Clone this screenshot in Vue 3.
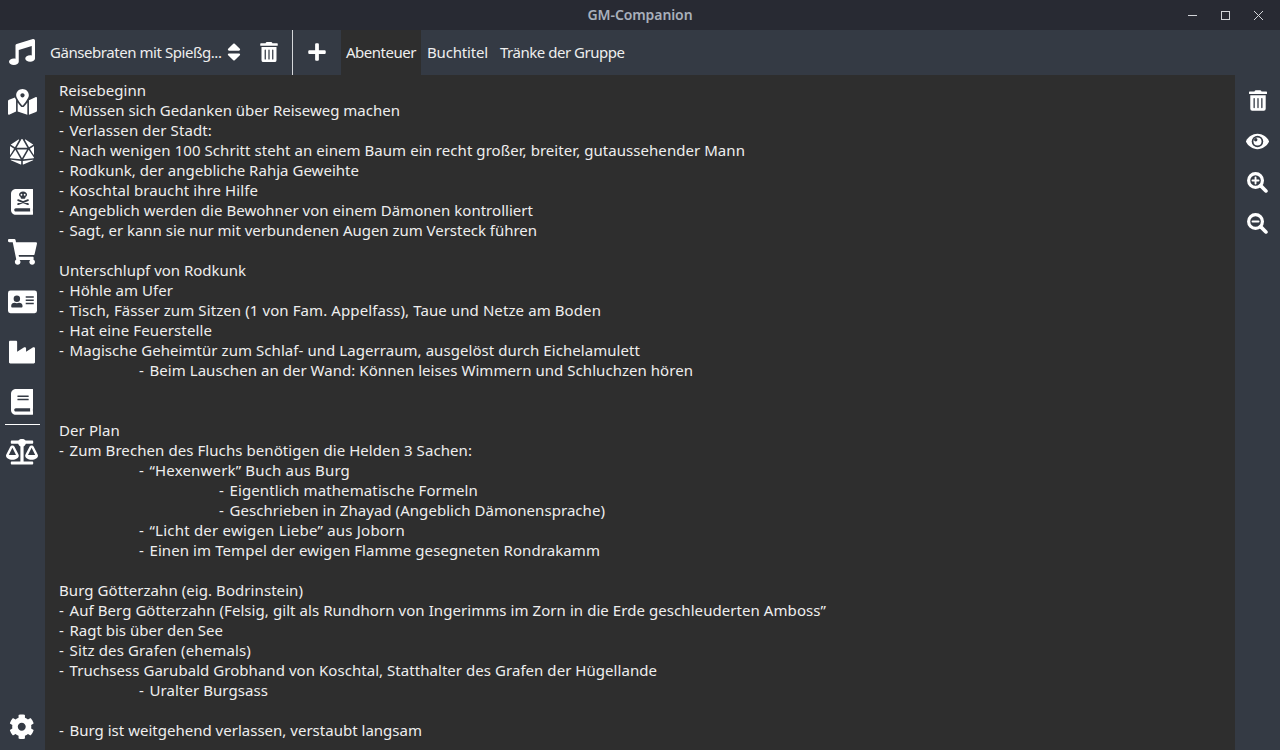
<script setup>
import { onMounted, ref } from 'vue'

const bookPath = 'M448 360V24c0-13.3-10.7-24-24-24H96C43 0 0 43 0 96v320c0 53 43 96 96 96h328c13.3 0 24-10.7 24-24v-16c0-7.5-3.5-14.3-8.9-18.7-4.2-15.4-4.2-59.3 0-74.7 5.4-4.3 8.9-11.1 8.9-18.6z'
const bookPages = 'M381.4 448H96c-17.7 0-32-14.3-32-32 0-17.6 14.4-32 32-32h285.4c-1.9 17.1-1.9 46.9 0 64z'
const icons = {
  music: { box: '0 0 512 512', w: 26, d: 'M511.99 32.01c0-21.71-21.1-37.01-41.6-30.51L150.4 96c-13.3 4.2-22.4 16.5-22.4 30.5v261.42c-10.05-2.38-20.72-3.92-32-3.92-53.02 0-96 28.65-96 64s42.98 64 96 64 96-28.65 96-64V214.31l256-75.02v184.63c-10.05-2.38-20.72-3.92-32-3.92-53.02 0-96 28.65-96 64s42.98 64 96 64 96-28.65 96-64l-.01-351.99z' },
  map: { box: '0 0 576 512', w: 29, d: 'M288 0c-69.59 0-126 56.41-126 126 0 56.26 82.35 158.8 113.9 196.02 6.39 7.54 17.82 7.54 24.2 0C331.65 284.8 414 182.26 414 126 414 56.41 357.59 0 288 0zm0 168c-23.2 0-42-18.8-42-42s18.8-42 42-42 42 18.8 42 42-18.8 42-42 42zM20.12 215.95A32.006 32.006 0 0 0 0 245.66v250.32c0 11.32 11.43 19.06 21.94 14.86L160 448V214.92c-8.84-15.98-16.07-31.54-21.25-46.42L20.12 215.95zM288 359.67c-14.07 0-27.38-6.18-36.51-16.96-19.66-23.2-40.57-49.62-59.49-76.72v182l192 64V266c-18.92 27.09-39.82 53.52-59.49 76.72-9.13 10.77-22.44 16.95-36.51 16.95zm266.06-198.51L416 224v288l139.88-55.95A31.996 31.996 0 0 0 576 426.34V176.02c0-11.32-11.43-19.06-21.94-14.86z' },
  dice: { box: '0 0 480 512', w: 24, d: 'M106.75 215.06L1.2 370.95c-3.08 5 .1 11.5 5.93 12.14l208.26 22.07-108.64-190.1zM7.41 315.43L82.7 193.08 6.06 147.1c-2.67-1.62-6.06.32-6.06 3.43v162.81c0 4.03 5.29 5.53 7.41 2.09zM18.25 423.6l194.4 87.66c5.3 2.45 11.35-1.43 11.35-7.26v-65.67l-203.55-22.3c-4.45-.5-6.23 5.59-2.2 7.57zm81.22-257.78L179.4 22.88c4.34-7.06-3.59-15.25-10.78-11.14L17.81 110.35c-2.47 1.62-2.39 5.26.13 6.78l81.53 48.69zM240 176h109.21L253.63 7.62C250.5 2.54 245.25 0 240 0s-10.5 2.54-13.63 7.62L130.79 176H240zm233.94-28.9l-76.64 45.99 75.29 122.35c2.11 3.44 7.41 1.94 7.41-2.1V150.53c0-3.11-3.39-5.05-6.06-3.43zm-93.41 18.72l81.53-48.7c2.53-1.52 2.6-5.16.13-6.78l-150.81-98.6c-7.19-4.11-15.12 4.08-10.78 11.14l79.93 142.94zm79.02 250.21L256 438.32v65.67c0 5.84 6.05 9.71 11.35 7.26l194.4-87.66c4.03-1.97 2.25-8.06-2.2-7.56zm-86.3-200.97l-108.63 190.1 208.26-22.07c5.83-.65 9.01-7.14 5.93-12.14L373.25 215.06zM240 208H139.57L240 383.75 340.43 208H240z' },
  monsters: { box: '0 0 448 512', w: 22.5, d: bookPath, cut: bookPages + 'M240 48c-45 0-80 27-80 62 0 21 13 38 32 50v16c0 9 7 16 16 16h64c9 0 16-7 16-16v-16c19-12 32-29 32-50 0-35-35-62-80-62zm-32 48a18 18 0 1 1 0 36 18 18 0 0 1 0-36zm64 0a18 18 0 1 1 0 36 18 18 0 0 1 0-36z', bones: 'M142 222L338 302M338 222L142 302' },
  cart: { box: '0 0 576 512', w: 29, d: 'M528.12 301.319l47.273-208C578.806 78.301 567.391 64 551.99 64H159.208l-9.166-44.81C147.758 8.021 137.93 0 126.529 0H24C10.745 0 0 10.745 0 24v16c0 13.255 10.745 24 24 24h69.883l70.248 343.435C147.325 417.1 136 435.222 136 456c0 30.928 25.072 56 56 56s56-25.072 56-56c0-15.674-6.447-29.835-16.824-40h209.647C430.447 426.165 424 440.326 424 456c0 30.928 25.072 56 56 56s56-25.072 56-56c0-22.172-12.888-41.332-31.579-50.405l5.517-24.276c3.413-15.018-8.002-29.319-23.403-29.319H218.117l-6.545-32h293.145c11.206 0 20.92-7.754 23.403-18.681z' },
  card: { box: '0 0 576 512', w: 29, d: 'M48 32h480a48 48 0 0 1 48 48v352a48 48 0 0 1-48 48H48a48 48 0 0 1-48-48V80a48 48 0 0 1 48-48z', cut: 'M176 128a64 64 0 1 1 0 128 64 64 0 0 1 0-128zM131 272c29 13 61 13 90 0 38 0 67 26 67 58v19c0 11-10 19-22 19H86c-12 0-22-8-22-19v-19c0-32 29-58 67-58zM352 144h160v32H352zM352 208h160v32H352zM352 272h160v32H352z' },
  industry: { box: '0 0 512 512', w: 26, d: 'M475.115 163.781L336 252.309v-68.28c0-18.916-20.931-30.399-36.885-20.248L160 252.309V56c0-13.255-10.745-24-24-24H24C10.745 32 0 42.745 0 56v400c0 13.255 10.745 24 24 24h464c13.255 0 24-10.745 24-24V184.029c0-18.917-20.931-30.399-36.885-20.248z' },
  book: { box: '0 0 448 512', w: 22.5, d: bookPath, cut: bookPages + 'M134 128h212q6 0 6 6v20q0 6-6 6H134q-6 0-6-6v-20q0-6 6-6zM134 192h212q6 0 6 6v20q0 6-6 6H134q-6 0-6-6v-20q0-6 6-6z' },
  scale: { box: '0 0 640 512', w: 32, d: 'M320 0c-38 0-62 14-71 32H112a16 16 0 0 0-16 16v32a16 16 0 0 0 16 16h131c8 24 23 42 45 52v300H112a16 16 0 0 0-16 16v32a16 16 0 0 0 16 16h416a16 16 0 0 0 16-16v-32a16 16 0 0 0-16-16H352V148c22-10 37-28 45-52h131a16 16 0 0 0 16-16V48a16 16 0 0 0-16-16H391c-9-18-33-32-71-32zM256 336c0-16 1-9-85-181-17-35-68-35-86 0C-2 329 0 321 0 336c0 44 57 80 128 80s128-36 128-80zM128 176l72 144H56zm512 160c0-16 1-9-85-181-17-35-68-35-86 0-87 174-85 166-85 181 0 44 57 80 128 80s128-36 128-80zM440 320l72-144 72 144z' },
  cog: { box: '0 0 512 512', w: 25.5, d: 'M487.4 315.7l-42.6-24.6c4.3-23.2 4.3-47 0-70.2l42.6-24.6c4.9-2.8 7.1-8.6 5.5-14-11.1-35.6-30-67.8-54.7-94.6-3.8-4.1-10-5.1-14.8-2.3L380.8 110c-17.9-15.4-38.5-27.3-60.8-35.1V25.8c0-5.6-3.9-10.5-9.4-11.7-36.7-8.2-74.3-7.8-109.2 0-5.5 1.2-9.4 6.1-9.4 11.7V75c-22.2 7.9-42.8 19.8-60.8 35.1L88.7 85.5c-4.9-2.8-11-1.9-14.8 2.3-24.7 26.7-43.6 58.9-54.7 94.6-1.7 5.4.6 11.2 5.5 14L67.3 221c-4.3 23.2-4.3 47 0 70.2l-42.6 24.6c-4.9 2.8-7.1 8.6-5.5 14 11.1 35.6 30 67.8 54.7 94.6 3.8 4.1 10 5.1 14.8 2.3l42.6-24.6c17.9 15.4 38.5 27.3 60.8 35.1v49.2c0 5.6 3.9 10.5 9.4 11.7 36.7 8.2 74.3 7.8 109.2 0 5.5-1.2 9.4-6.1 9.4-11.7v-49.2c22.2-7.9 42.8-19.8 60.8-35.1l42.6 24.6c4.9 2.8 11 1.9 14.8-2.3 24.7-26.7 43.6-58.9 54.7-94.6 1.5-5.5-.7-11.3-5.6-14.1zM256 336c-44.1 0-80-35.9-80-80s35.9-80 80-80 80 35.9 80 80-35.9 80-80 80z' }
}
const tools = ['music', 'map', 'dice', 'monsters', 'cart', 'card', 'industry', 'book', 'scale', 'cog']

const trash = 'M32 464a48 48 0 0 0 48 48h288a48 48 0 0 0 48-48V128H32zm272-256a16 16 0 0 1 32 0v224a16 16 0 0 1-32 0zm-96 0a16 16 0 0 1 32 0v224a16 16 0 0 1-32 0zm-96 0a16 16 0 0 1 32 0v224a16 16 0 0 1-32 0zM432 32H312l-9.4-18.7A24 24 0 0 0 281.1 0H166.8a23.72 23.72 0 0 0-21.4 13.3L136 32H16A16 16 0 0 0 0 48v32a16 16 0 0 0 16 16h416a16 16 0 0 0 16-16V48a16 16 0 0 0-16-16z'

// Each line: indent level, text, measure in pixels
const source = [
  [0, 'Reisebeginn', 87],
  [0, '- Müssen sich Gedanken über Reiseweg machen', 341],
  [0, '- Verlassen der Stadt:', 153],
  [0, '- Nach wenigen 100 Schritt steht an einem Baum ein recht großer, breiter, gutaussehender Mann', 686],
  [0, '- Rodkunk, der angebliche Rahja Geweihte', 300],
  [0, '- Koschtal braucht ihre Hilfe', 199],
  [0, '- Angeblich werden die Bewohner von einem Dämonen kontrolliert', 474],
  [0, '- Sagt, er kann sie nur mit verbundenen Augen zum Versteck führen', 478],
  [0, '', 0],
  [0, 'Unterschlupf von Rodkunk', 187],
  [0, '- Höhle am Ufer', 114],
  [0, '- Tisch, Fässer zum Sitzen (1 von Fam. Appelfass), Taue und Netze am Boden', 542],
  [0, '- Hat eine Feuerstelle', 153],
  [0, '- Magische Geheimtür zum Schlaf- und Lagerraum, ausgelöst durch Eichelamulett', 581],
  [1, '- Beim Lauschen an der Wand: Können leises Wimmern und Schluchzen hören', 554],
  [0, '', 0],
  [0, '', 0],
  [0, 'Der Plan', 61],
  [0, '- Zum Brechen des Fluchs benötigen die Helden 3 Sachen:', 413],
  [1, '- “Hexenwerk” Buch aus Burg', 211],
  [2, '- Eigentlich mathematische Formeln', 259],
  [2, '- Geschrieben in Zhayad (Angeblich Dämonensprache)', 386],
  [1, '- “Licht der ewigen Liebe” aus Joborn', 266],
  [1, '- Einen im Tempel der ewigen Flamme gesegneten Rondrakamm', 461],
  [0, '', 0],
  [0, 'Burg Götterzahn (eig. Bodrinstein)', 244],
  [0, '- Auf Berg Götterzahn (Felsig, gilt als Rundhorn von Ingerimms im Zorn in die Erde geschleuderten Amboss”', 767],
  [0, '- Ragt bis über den See', 164],
  [0, '- Sitz des Grafen (ehemals)', 192],
  [0, '- Truchsess Garubald Grobhand von Koschtal, Statthalter des Grafen der Hügellande', 598],
  [1, '- Uralter Burgsass', 129],
  [0, '', 0],
  [0, '- Burg ist weitgehend verlassen, verstaubt langsam', 363]
]
const dashWidth = 10.5
const lines = source.map(([indent, text, measure]) => {
  const dash = text.startsWith('- ')
  return { indent, dash, text: dash ? text.slice(2) : text, measure: dash ? measure - dashWidth : measure }
})

// Spread the letters of every measured label over its measure
const root = ref(null)
onMounted(() => {
  root.value.querySelectorAll('[data-measure]').forEach((el) => {
    const measure = Number(el.dataset.measure)
    const count = el.textContent.length
    if (!measure || !count) return
    const natural = el.getBoundingClientRect().width
    el.style.letterSpacing = `${(measure - natural) / count}px`
  })
})
</script>

<template>
  <div ref="root" class="window">
    <header class="titlebar">
      <span class="side"></span>
      <h1><span data-measure="105">GM-Companion</span></h1>
      <div class="side controls">
        <svg width="11" height="11" viewBox="0 0 11 11"><path d="M1 5.5h9" /></svg>
        <svg width="11" height="11" viewBox="0 0 11 11"><rect x="1.5" y="1.5" width="8" height="8" /></svg>
        <svg width="11" height="11" viewBox="0 0 11 11"><path d="M1 1l9 9M10 1l-9 9" /></svg>
      </div>
    </header>

    <div class="main">
      <nav class="sidebar">
        <button v-for="name in tools" :key="name" :class="['tool', name]">
          <svg :viewBox="icons[name].box" :width="icons[name].w">
            <path :d="icons[name].d" fill-rule="evenodd" />
            <path v-if="icons[name].cut" class="cut" :d="icons[name].cut" fill-rule="evenodd" />
            <path v-if="icons[name].bones" class="bones" :d="icons[name].bones" />
          </svg>
        </button>
      </nav>

      <div class="workspace">
        <div class="toolbar">
          <div class="picker">
            <span data-measure="171.5">Gänsebraten mit Spießg...</span>
            <svg viewBox="0 0 320 512" width="14" height="22"><path d="M41 288h238c21.4 0 32.1 25.9 17 41L177 448c-9.4 9.4-24.6 9.4-33.9 0L24 329c-15.1-15.1-4.4-41 17-41zm255-105L177 64c-9.4-9.4-24.6-9.4-33.9 0L24 183c-15.1 15.1-4.4 41 17 41h238c21.4 0 32.1-25.9 17-41z" /></svg>
          </div>
          <button class="square"><svg viewBox="0 0 448 512" width="18" height="20"><path :d="trash" /></svg></button>
          <button class="square add"><svg viewBox="0 0 448 512" width="18" height="20"><path d="M416 208H272V64c0-17.67-14.33-32-32-32h-32c-17.67 0-32 14.33-32 32v144H32c-17.67 0-32 14.33-32 32v32c0 17.67 14.33 32 32 32h144v144c0 17.67 14.33 32 32 32h32c17.67 0 32-14.33 32-32V304h144c17.67 0 32-14.33 32-32v-32c0-17.67-14.33-32-32-32z" /></svg></button>
          <div class="tab active"><span data-measure="70">Abenteuer</span></div>
          <div class="tab"><span data-measure="61">Buchtitel</span></div>
          <div class="tab"><span data-measure="124.5">Tränke der Gruppe</span></div>
        </div>

        <div class="body">
          <article class="notes">
            <p v-for="(line, i) in lines" :key="i" :class="'indent-' + line.indent"><span v-if="line.dash" class="dash">- </span><span :data-measure="line.measure">{{ line.text }}</span></p>
          </article>
          <aside class="actions">
            <svg viewBox="0 0 448 512" width="18" height="21"><path :d="trash" /></svg>
            <svg class="eye" viewBox="0 0 576 512" width="23" height="21"><path d="M572.52 241.4C518.29 135.59 410.93 64 288 64S57.68 135.64 3.48 241.41a32.35 32.35 0 0 0 0 29.19C57.71 376.41 165.07 448 288 448s230.32-71.64 284.52-177.41a32.35 32.35 0 0 0 0-29.19z" /><circle class="cut" cx="288" cy="256" r="144" /><circle cx="288" cy="256" r="101" /><circle class="cut" cx="244" cy="212" r="42" /></svg>
            <svg class="lens" viewBox="0 0 512 512" width="21" height="21"><circle cx="208" cy="208" r="168" /><path class="handle" d="M338 338L462 462" /><path class="sign" d="M134 208h148M208 134v148" /></svg>
            <svg class="lens" viewBox="0 0 512 512" width="21" height="21"><circle cx="208" cy="208" r="168" /><path class="handle" d="M338 338L462 462" /><path class="sign" d="M134 208h148" /></svg>
          </aside>
        </div>
      </div>
    </div>
  </div>
</template>

<style>
body { background: #2e2e2e; }
</style>

<style scoped>
.window {
  width: 1280px;
  height: 750px;
  display: flex;
  flex-direction: column;
  overflow: hidden;
  background: #2e2e2e;
  color: #eeeeee;
  font: 15px/20px "Noto Sans", "Open Sans", sans-serif;
}
span, p { white-space: pre; }
svg { display: block; fill: #fff; flex: none; }
button { border: 0; padding: 0; background: none; display: flex; align-items: center; justify-content: center; }
.titlebar { height: 30px; flex: none; display: flex; align-items: center; background: #282a33; }
.side { flex: 1 1 0; min-width: 0; box-sizing: border-box; }
.side:first-child { padding-right: 16px; }
.titlebar h1 { margin: 0; font-size: 14px; font-weight: 600; color: #a9b0bb; }
.controls { display: flex; justify-content: flex-end; gap: 22px; padding-right: 16px; }
.controls svg { fill: none; stroke: #d3d5d9; stroke-width: 1; }
.main { flex: 1; display: flex; min-height: 0; }
.sidebar { width: 45px; flex: none; display: flex; flex-direction: column; gap: 5px; background: #343a44; }
.tool { height: 45px; flex: none; position: relative; padding: 0 1px 1px 0; }
.tool.cog { margin-top: auto; }
.tool.scale::before { content: ""; position: absolute; left: 5px; right: 5px; top: -6px; height: 1px; background: #fff; }
.cut { fill: #343a44; }
.bones { stroke: #343a44; stroke-width: 36; stroke-linecap: round; }
.workspace { flex: 1; display: flex; flex-direction: column; min-width: 0; }
.toolbar { height: 45px; flex: none; display: flex; background: #343a44; }
.picker { width: 201px; flex: none; box-sizing: border-box; padding: 0 0 1px 5px; display: flex; align-items: center; gap: 5px; }
.square { width: 46px; flex: none; padding-bottom: 1px; }
.add { width: 49px; border-left: 1px solid #d5d7da; }
.tab { padding: 0 6px 2px; display: flex; align-items: center; }
.tab.active { padding: 0 5px 2px; background: #2e2e2e; }
.body { flex: 1; display: flex; min-height: 0; }
.notes { flex: 1; padding: 5px 14px 0; }
.notes p { margin: 0; height: 20px; }
.notes .dash { display: inline-block; width: 10.5px; }
.notes .indent-1 { padding-left: 80px; }
.notes .indent-2 { padding-left: 160px; }
.actions { width: 45px; flex: none; display: flex; flex-direction: column; align-items: center; gap: 20px; padding-top: 15px; box-sizing: border-box; background: #343a44; }
.lens { fill: none; stroke: #fff; stroke-width: 78; stroke-linecap: round; }
.lens .handle { stroke-width: 88; }
.lens .sign { stroke-width: 46; }
</style>
